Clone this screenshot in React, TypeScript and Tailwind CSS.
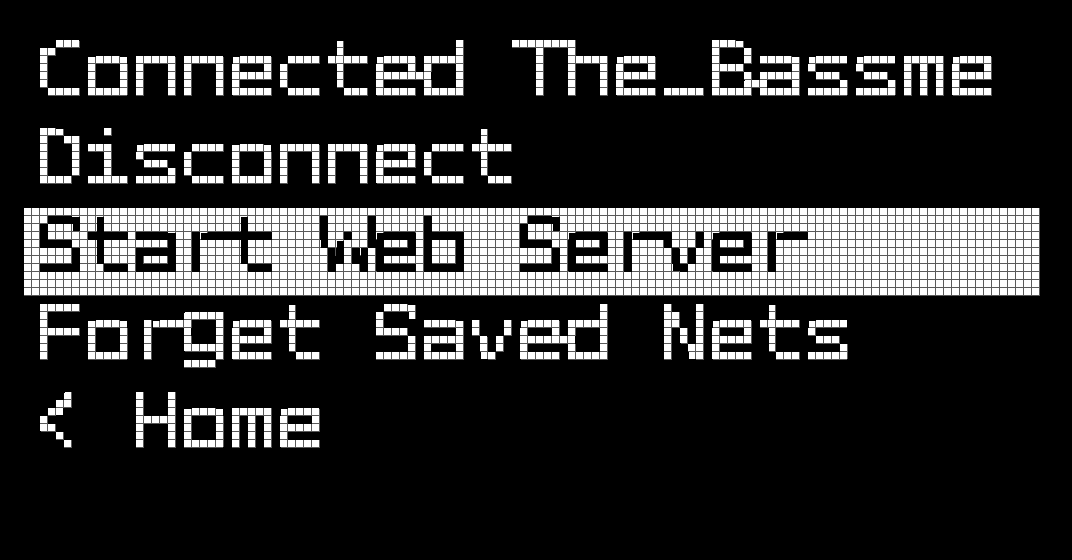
import React from 'react'

// OLED style menu: real text, sampled onto an 8px "pixel" grid by an SVG filter
const items = [
  { label: 'Connected The_Bassme', selected: false },
  { label: 'Disconnect', selected: false },
  { label: 'Start Web Server', selected: true },
  { label: 'Forget Saved Nets', selected: false },
  { label: '< Home', selected: false },
]

function PixelFilter({ id, invert }: { id: string; invert?: boolean }) {
  return (
    <filter id={id} x="0" y="0" width="100%" height="100%" colorInterpolationFilters="sRGB">
      {/* thin vertical stems a little, thicken horizontals by 1px */}
      <feOffset in="SourceGraphic" dx="1" dy="0" result="r1" />
      <feOffset in="SourceGraphic" dx="-1" dy="0" result="l1" />
      <feBlend in="SourceGraphic" in2="r1" mode="darken" result="t1" />
      <feBlend in="t1" in2="l1" mode="darken" result="t2" />
      <feOffset in="t2" dx="0" dy="1" result="d1" />
      <feBlend in="t2" in2="d1" mode="lighten" result="thin" />
      <feComponentTransfer in="thin" result="bin">
        <feFuncR type="discrete" tableValues="0 1" />
        <feFuncG type="discrete" tableValues="0 1" />
        <feFuncB type="discrete" tableValues="0 1" />
      </feComponentTransfer>
      {/* sample one point per 8x8 cell and fill the cell with it */}
      <feFlood x="3" y="3" width="2" height="2" floodColor="#ffffff" result="dot" />
      <feComposite in="dot" in2="dot" operator="over" x="0" y="0" width="8" height="8" result="cell" />
      <feTile in="cell" result="dots" />
      <feComposite in="bin" in2="dots" operator="in" result="samp" />
      <feMorphology in="samp" operator="dilate" radius="3" result="px" />
      {invert && (
        <feComponentTransfer in="px">
          <feFuncR type="table" tableValues="1 0" />
          <feFuncG type="table" tableValues="1 0" />
          <feFuncB type="table" tableValues="1 0" />
        </feComponentTransfer>
      )}
    </filter>
  )
}

// a few glyphs of the vector font need nudging to sit like the display font
const glyphClass: Record<string, string> = {
  _: 'inline-block leading-[40px] origin-[30px_50%] [-webkit-text-stroke:5px_white] [transform:translateY(-27px)_scaleX(0.7)]',
  '<': 'inline-block leading-[40px] origin-[30px_22px] [transform:translate(-3.7px,-5.7px)_scale(0.57,1.6)]',
  m: 'inline-block origin-[30px_50%] [transform:scaleX(0.8)]',
  g: 'inline-block leading-[40px] [transform:translateY(-10.9px)]',
}

function Label({ text }: { text: string }) {
  const runs: { s: string; cls?: string }[] = []
  for (const ch of text) {
    const cls = glyphClass[ch]
    const last = runs[runs.length - 1]
    if (!cls && last && !last.cls) last.s += ch
    else runs.push({ s: ch, cls })
  }
  return (
    <>
      {runs.map((r, i) =>
        r.cls ? (
          <span key={i} className={r.cls}>
            {r.s}
          </span>
        ) : (
          <React.Fragment key={i}>{r.s}</React.Fragment>
        )
      )}
    </>
  )
}

export default function App() {
  return (
    <div className="relative w-[1072px] h-[560px] bg-black">
      <svg className="absolute w-0 h-0" aria-hidden="true">
        <defs>
          <PixelFilter id="px-on" />
          <PixelFilter id="px-inv" invert />
        </defs>
      </svg>
      <div className="flex flex-col pt-[32px]">
        {items.map((it) => (
          <div
            key={it.label}
            className={
              it.selected
                ? 'ml-[24px] w-[1016px] h-[88px] bg-black text-white [filter:url(#px-inv)]'
                : 'ml-[24px] w-[1016px] h-[88px] bg-black text-white [filter:url(#px-on)]'
            }
          >
            <span className="block whitespace-pre font-['DejaVu_Sans_Mono',monospace] text-[99.66px] leading-[100px] tracking-[-12px] origin-top-left [transform:translate(5.7px,2px)_scaleY(0.734)]">
              <Label text={it.label} />
            </span>
          </div>
        ))}
      </div>
      <div className="absolute inset-0 pointer-events-none mix-blend-multiply bg-[linear-gradient(to_right,transparent_7px,#5a5a5a_7px),linear-gradient(to_bottom,transparent_7px,#5a5a5a_7px)] bg-[length:8px_8px]" />
    </div>
  )
}
